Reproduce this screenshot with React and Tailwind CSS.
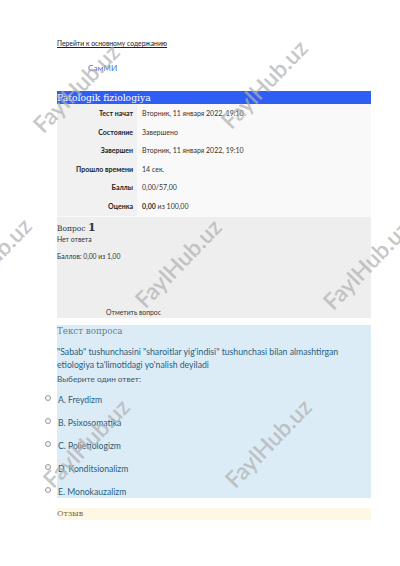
import React from 'react';

const rows = [
  ['Тест начат', 'Вторник, 11 января 2022, 19:10'],
  ['Состояние', 'Завершено'],
  ['Завершен', 'Вторник, 11 января 2022, 19:10'],
  ['Прошло времени', '14 сек.'],
  ['Баллы', '0,00/57,00'],
  ['Оценка', null],
];

const answers = [
  'A. Freydizm',
  'B. Psixosomatika',
  'C. Polietiologizm',
  'D. Konditsionalizm',
  'E. Monokauzalizm',
];

const marks = [
  [76, 88], [264, 84], [455, 72],
  [-12, 262], [178, 263], [366, 265],
  [86, 443], [268, 443], [458, 470],
];

const Watermark = ({ x, y }) => (
  <div
    className="absolute pointer-events-none select-none text-[23px] font-semibold text-[#b0b0b0] opacity-70 whitespace-nowrap"
    style={{ left: x, top: y, transform: 'translate(-50%, -50%) rotate(-46deg)' }}
  >
    FaylHub.uz
  </div>
);

export default function App() {
  const sans = { fontFamily: 'Lato, "Open Sans", sans-serif' };
  const serif = { fontFamily: '"DejaVu Serif", "Liberation Serif", serif' };

  return (
    <div className="relative w-[400px] min-h-[566px] bg-white overflow-hidden" style={sans}>
      <div className="pl-[57px] pr-[29px] pt-[39px]">
        <a href="#" className="block text-[6.8px] text-[#222] underline leading-[9px]">
          Перейти к основному содержанию
        </a>

        <div className="pl-[31px] mt-[15px] text-[8.2px] leading-[11px] text-[#4a6fe0]">СамМИ</div>

        <div className="mt-[17px] h-[13px] bg-[#2f5ef5] text-white text-[9.2px] leading-[13px]" style={serif}>
          Patologik fiziologiya
        </div>

        <div className="pb-[1px] bg-[#f9f9f9]">
          {rows.map(([label, value]) => (
            <div key={label} className="flex h-[18.6px] items-center text-[7px]">
              <div className="w-[80px] h-full flex items-center justify-end pr-[4px] font-bold text-[#222] bg-[#f1f1f1]">
                {label}
              </div>
              <div className="pl-[5px] text-[#333]">
                {value ?? (
                  <span>
                    <b>0,00</b> из 100,00
                  </span>
                )}
              </div>
            </div>
          ))}
        </div>

        <div className="h-[101px] bg-[#eeeeee] flex flex-col pt-[2px]">
          <div className="text-[#333] leading-[13px]" style={serif}>
            <span className="text-[7.5px]">Вопрос </span>
            <span className="text-[11px] font-bold">1</span>
          </div>
          <div className="text-[6.8px] leading-[9px] text-[#333]">Нет ответа</div>
          <div className="mt-[8px] text-[6.8px] leading-[9px] text-[#333]">Баллов: 0,00 из 1,00</div>
          <div className="mt-auto mb-[1px] pl-[49px] text-[6.8px] leading-[9px] text-[#333]">Отметить вопрос</div>
        </div>

        <div className="mt-[7px] h-[173px] bg-[#dcecf7]">
          <div className="text-[8.7px] leading-[12px] text-[#5d7f90]" style={serif}>Текст вопроса</div>
          <div className="mt-[8px] text-[8.7px] leading-[13px] text-[#2b5c7a]">
            "Sabab" tushunchasini "sharoitlar yig'indisi" tushunchasi bilan almashtirgan etiologiya ta'limotidagi yo'nalish deyiladi
          </div>
          <div className="mt-[2px] text-[8.2px] leading-[12px] text-[#3f5668]">Выберите один ответ:</div>
          <div className="mt-[10px] flex flex-col gap-[11px]">
            {answers.map((a) => (
              <div key={a} className="relative flex items-center h-[12px]">
                <div className="absolute left-[-13px] top-[-3px] w-[13px] h-[13px] bg-white">
                  <div className="ml-[1px] mt-[3px] w-[6px] h-[6px] rounded-full border border-[#9a9a9a] bg-[#f4f4f4]" />
                </div>
                <span className="pl-[1px] text-[8.6px] text-[#2b5c7a]">{a}</span>
              </div>
            ))}
          </div>
        </div>

        <div className="mt-[10px] h-[12px] bg-[#fcf8e3] text-[8px] leading-[12px] text-[#8a6d3b]" style={serif}>
          Отзыв
        </div>
      </div>

      {marks.map(([x, y], i) => (
        <Watermark key={i} x={x} y={y} />
      ))}
    </div>
  );
}
